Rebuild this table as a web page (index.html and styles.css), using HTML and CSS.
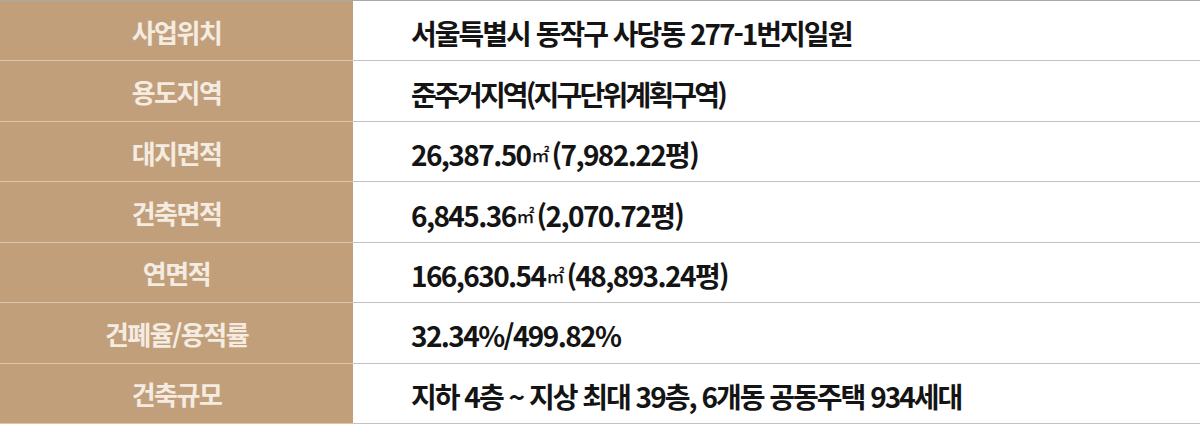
FILE: index.html
```html
<!DOCTYPE html>
<html lang="ko">
<head>
<meta charset="utf-8">
<title>사업개요</title>
<link rel="stylesheet" href="styles.css">
</head>
<body>
<div class="spec">
  <div class="row"><div class="th">사업위치</div><div class="td">서울특별시 동작구 사당동 277-1번지일원</div></div>
  <div class="row"><div class="th">용도지역</div><div class="td narrow">준주거지역(지구단위계획구역)</div></div>
  <div class="row"><div class="th">대지면적</div><div class="td num">26,387.50<span class="unit">㎡</span>(7,982.22평)</div></div>
  <div class="row"><div class="th">건축면적</div><div class="td num">6,845.36<span class="unit">㎡</span>(2,070.72평)</div></div>
  <div class="row"><div class="th">연면적</div><div class="td num">166,630.54<span class="unit">㎡</span>(48,893.24평)</div></div>
  <div class="row"><div class="th">건폐율/용적률</div><div class="td num">32.34%/499.82%</div></div>
  <div class="row"><div class="th">건축규모</div><div class="td">지하 4층 ~ 지상 최대 39층, 6개동 공동주택 934세대</div></div>
</div>
</body>
</html>
```
FILE: styles.css
```css
* { box-sizing: border-box; }
html, body { margin: 0; padding: 0; background: #ffffff; }
body {
  width: 1200px;
  height: 425px;
  overflow: hidden;
  font-family: "Noto Sans CJK KR", "Noto Sans", sans-serif;
}
.spec {
  border-top: 1px solid #a9a9a9;
}
.row {
  display: grid;
  grid-template-columns: 353px 1fr;
  height: 60.45px;
}
.th {
  background: #c29f7b;
  color: #f4ebe1;
  border-bottom: 1px solid #dac5ad;
  display: flex;
  align-items: center;
  justify-content: center;
  font-size: 26px;
  font-weight: 700;
  letter-spacing: -1.5px;
  padding-top: 1px;
}
.td {
  border-bottom: 1px solid #c2c2c2;
  display: flex;
  align-items: center;
  padding-left: 58px;
  padding-top: 5px;
  color: #141414;
  font-size: 28px;
  font-weight: 700;
  letter-spacing: -2px;
  white-space: nowrap;
}
.narrow {
  letter-spacing: -2.8px;
}
.num {
  letter-spacing: -1.6px;
}
.unit {
  font-size: 18px;
  font-weight: 500;
  letter-spacing: 0;
  margin: 0 2px 0 1px;
}
```
